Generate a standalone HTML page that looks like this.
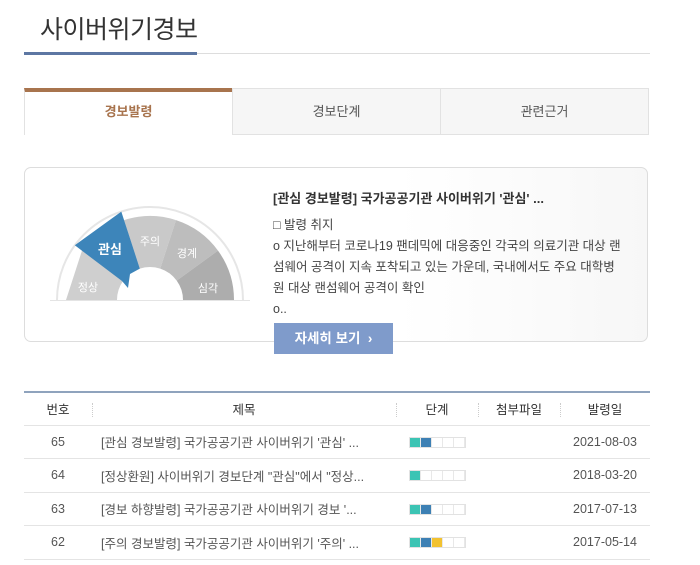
<!DOCTYPE html>
<html><head><meta charset="utf-8"><style>
*{margin:0;padding:0;box-sizing:border-box}
body{width:700px;height:565px;background:#fff;font-family:"Liberation Sans","Noto Sans CJK KR",sans-serif;color:#333;position:relative;overflow:hidden}
.a{position:absolute}
.title{left:40px;top:10px;font-size:25px;color:#333;letter-spacing:-0.5px}
.tab{top:88px;height:47px;border:1px solid #e2e2e2;background:#f6f6f6;font-size:13px;color:#555;text-align:center;line-height:45px}
.card{left:24px;top:167px;width:624px;height:175px;border:1px solid #ddd;border-radius:7px;background:linear-gradient(90deg,#fff 60%,#f7f7f7)}
.txt{left:273px;font-size:12.5px;color:#333}
table{position:absolute;left:24px;top:391px;width:626px;border-collapse:collapse;font-size:12.5px;color:#555}
th{height:33px;font-weight:normal;color:#333;border-top:2px solid #8fa3bd;border-bottom:1px solid #e4e4e4;position:relative}
th.d:before{content:"";position:absolute;left:0;top:10px;height:14px;border-left:1px dotted #ccc}
td{height:33.5px;border-bottom:1px solid #e4e4e4}
.bar{display:inline-flex;border:1px solid #e2e2e2;height:11px;vertical-align:middle}
.bar i{display:block;width:11px;height:9px;border-right:1px solid #e8e8e8}
</style></head><body>
<div class="a title">사이버위기경보</div>
<div class="a" style="left:24px;top:53px;width:626px;height:1px;background:#ddd"></div>
<div class="a" style="left:24px;top:52px;width:173px;height:3px;background:#5d77a3"></div>

<div class="a tab" style="left:24px;width:209px;background:#fff;border-top:4px solid #a8744e;border-bottom:none;color:#a8744e;font-weight:bold;line-height:40px">경보발령</div>
<div class="a tab" style="left:232px;width:209px">경보단계</div>
<div class="a tab" style="left:440px;width:209px">관련근거</div>

<div class="a card"></div>
<svg class="a" style="left:0;top:0" width="300" height="310">
<path d="M57 300 A93 93 0 0 1 243 300" fill="#fff" stroke="#e6e6e6" stroke-width="2"/>
<path d="M66 300 L82 250.6 A84 84 0 0 1 124 220.1 L139.8 268.6 A33 33 0 0 0 117 300Z" fill="#cfcfcf"/>
<path d="M124 220.1 A84 84 0 0 1 176 220.1 L160.2 268.6 A33 33 0 0 0 139.8 268.6Z" fill="#c9c9c9"/>
<path d="M176 220.1 A84 84 0 0 1 218 250.6 L176.7 280.6 A33 33 0 0 0 160.2 268.6Z" fill="#bdbdbd"/>
<path d="M218 250.6 A84 84 0 0 1 234 300 L183 300 A33 33 0 0 0 176.7 280.6Z" fill="#adadad"/>
<path d="M74.8 245.3 L121.3 211.6 L139.8 268.6 L130 274 L128 288 L122 281 Z" fill="#3d85ba"/>
<line x1="50" y1="300.5" x2="250" y2="300.5" stroke="#e4e4e4"/>
<g font-family="Liberation Sans,Noto Sans CJK KR,sans-serif" font-size="11" fill="#fff" text-anchor="middle">
<text x="110" y="254" font-size="13" font-weight="bold">관심</text>
<text x="150" y="245">주의</text>
<text x="187" y="257">경계</text>
<text x="88" y="291">정상</text>
<text x="208" y="292">심각</text>
</g>
</svg>
<div class="a txt" style="top:188px;font-weight:bold;font-size:13px">[관심 경보발령] 국가공공기관 사이버위기 '관심' ...</div>
<div class="a txt" style="top:215px;line-height:21px;width:352px;color:#444;word-break:break-all">□ 발령 취지<br>o 지난해부터 코로나19 팬데믹에 대응중인 각국의 의료기관 대상 랜섬웨어 공격이 지속 포착되고 있는 가운데, 국내에서도 주요 대학병원 대상 랜섬웨어 공격이 확인<br>o..</div>
<div class="a" style="left:274px;top:323px;width:119px;height:31px;background:#7f9bcb;color:#fff;font-weight:bold;font-size:13.5px;line-height:31px;text-align:center">자세히 보기 &nbsp;›</div>

<table>
<tr><th style="width:68px">번호</th><th class="d" style="width:304px">제목</th><th class="d" style="width:82px">단계</th><th class="d" style="width:82px">첨부파일</th><th class="d">발령일</th></tr>
<tr><td align="center">65</td><td style="padding-left:9px">[관심 경보발령] 국가공공기관 사이버위기 '관심' ...</td><td align="center"><span class="bar"><i style="background:#3cc4b4"></i><i style="background:#3d80b4"></i><i></i><i></i><i></i></span></td><td></td><td align="center">2021-08-03</td></tr>
<tr><td align="center">64</td><td style="padding-left:9px">[정상환원] 사이버위기 경보단계 "관심"에서 "정상...</td><td align="center"><span class="bar"><i style="background:#3cc4b4"></i><i></i><i></i><i></i><i></i></span></td><td></td><td align="center">2018-03-20</td></tr>
<tr><td align="center">63</td><td style="padding-left:9px">[경보 하향발령] 국가공공기관 사이버위기 경보 '...</td><td align="center"><span class="bar"><i style="background:#3cc4b4"></i><i style="background:#3d80b4"></i><i></i><i></i><i></i></span></td><td></td><td align="center">2017-07-13</td></tr>
<tr><td align="center">62</td><td style="padding-left:9px">[주의 경보발령] 국가공공기관 사이버위기 '주의' ...</td><td align="center"><span class="bar"><i style="background:#3cc4b4"></i><i style="background:#3d80b4"></i><i style="background:#f2c230"></i><i></i><i></i></span></td><td></td><td align="center">2017-05-14</td></tr>
</table>
</body></html>
